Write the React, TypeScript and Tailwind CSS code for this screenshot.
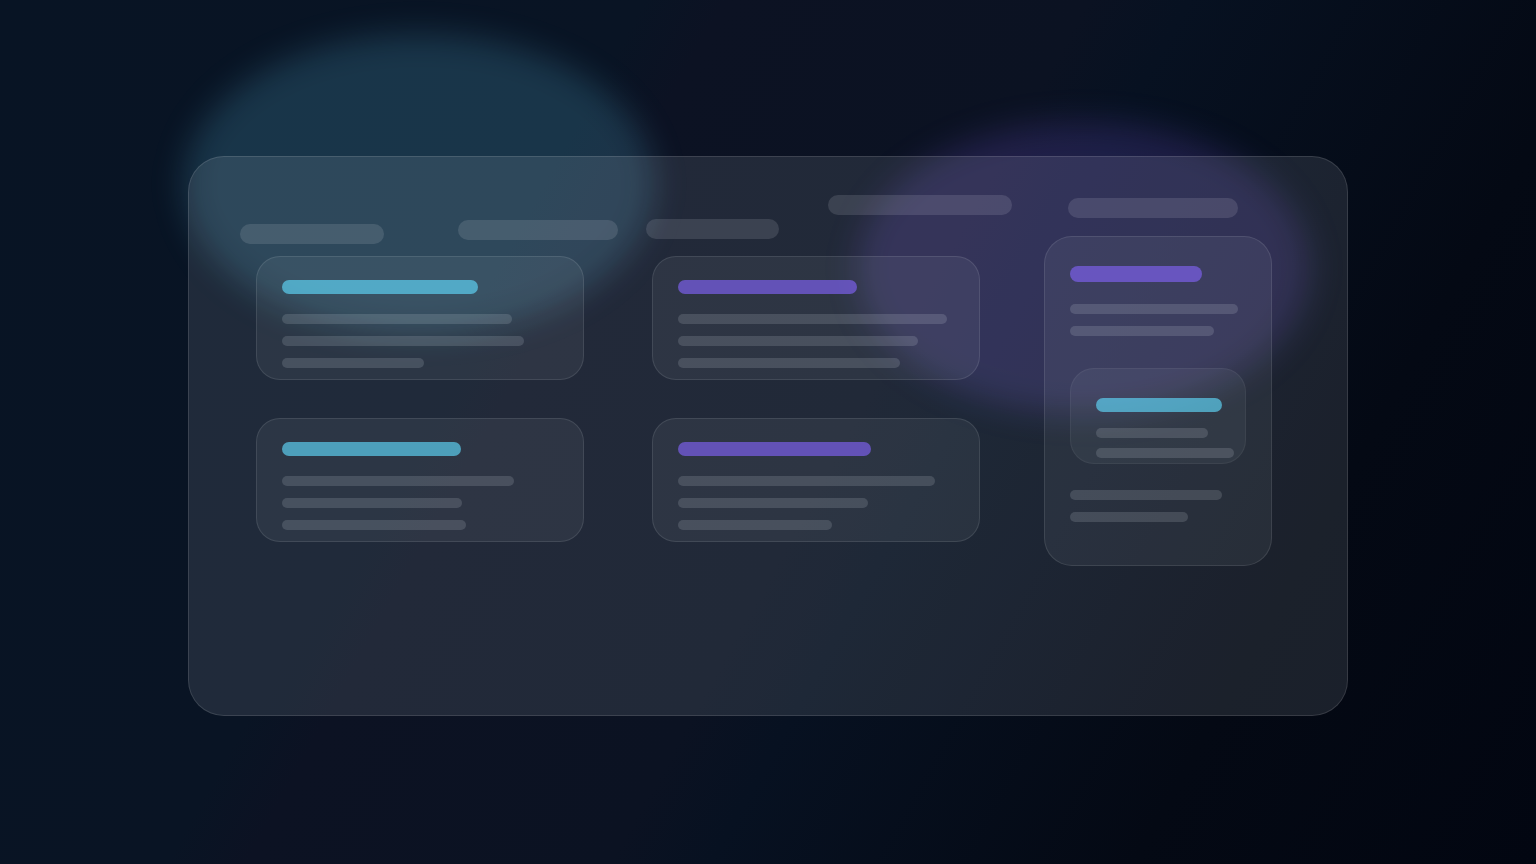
import React from 'react';

interface CardData {
  id: number;
  title: string;
  lines: string[];
}

const TEAL = 'bg-[#5fd8fb]/65';
const VIOLET = 'bg-[#7b5fe8]/70';

const cards: CardData[] = [
  { id: 1, title: `w-[196px] ${TEAL}`, lines: ['w-[230px]', 'w-[242px]', 'w-[142px]'] },
  { id: 2, title: `w-[179px] ${VIOLET}`, lines: ['w-[269px]', 'w-[240px]', 'w-[222px]'] },
  { id: 3, title: `w-[179px] ${TEAL}`, lines: ['w-[232px]', 'w-[180px]', 'w-[184px]'] },
  { id: 4, title: `w-[193px] ${VIOLET}`, lines: ['w-[257px]', 'w-[190px]', 'w-[154px]'] },
];

const Line: React.FC<{ width: string }> = ({ width }) => (
  <div className={`h-2.5 max-w-full rounded-full bg-[#f4f7ff]/14 ${width}`} />
);

const Pill: React.FC<{ className: string }> = ({ className }) => (
  <div className={`h-5 rounded-full bg-[#f4f7ff]/12 ${className}`} />
);

const Card: React.FC<{ card: CardData }> = ({ card }) => (
  <article className="h-[124px] rounded-3xl border border-white/10 bg-[#f4f7ff]/6 px-[25px] pt-[23px]">
    <div className={`h-3.5 rounded-full ${card.title}`} />
    <div className="mt-5 flex flex-col gap-3">
      {card.lines.map((width, i) => (
        <Line key={i} width={width} />
      ))}
    </div>
  </article>
);

const Sidebar: React.FC = () => (
  <aside className="h-[330px] rounded-[28px] border border-white/10 bg-[#f4f7ff]/6 px-[25px] pt-[29px]">
    <div className={`h-4 w-[132px] rounded-full ${VIOLET}`} />
    <div className="mt-[22px] flex flex-col gap-3">
      <Line width="w-[168px]" />
      <Line width="w-[144px]" />
    </div>
    <div className="mt-8 h-24 rounded-3xl border border-white/5 bg-[#f4f7ff]/5 pt-[29px] pl-[25px]">
      <div className={`h-3.5 w-[126px] rounded-full ${TEAL}`} />
      <div className="mt-4 flex flex-col gap-2.5">
        <Line width="w-[112px]" />
        <Line width="w-[138px]" />
      </div>
    </div>
    <div className="mt-[26px] flex flex-col gap-3">
      <Line width="w-[152px]" />
      <Line width="w-[118px]" />
    </div>
  </aside>
);

const App: React.FC = () => {
  return (
    <div className="relative min-h-screen overflow-hidden bg-[linear-gradient(119deg,#081424_0%,#091424_32%,#0c1223_36%,#0b1222_54%,#071121_59%,#040914_80%,#020611_100%)]">
      {/* Glow behind the glass */}
      <div className="absolute top-[34px] left-[184px] h-[300px] w-[470px] rounded-[50%] bg-[#66ccf6]/18 blur-[16px]" />
      <div className="absolute top-[122px] left-[858px] h-[292px] w-[452px] rounded-[50%] bg-[#835cf6]/18 blur-[16px]" />

      <main className="relative px-[188px] pt-[156px] pb-[148px]">
        <section className="flex min-h-[560px] items-start gap-8 rounded-[36px] border border-white/12 bg-[#eafaff]/10 pt-[38px] pr-[75px] pl-[51px]">
          <div className="min-w-0 flex-1">
            <header className="flex h-[61px] items-start">
              <Pill className="mt-[29px] w-36" />
              <Pill className="mt-[25px] ml-[74px] w-40" />
              <Pill className="mt-6 ml-7 w-[133px]" />
              <Pill className="ml-[49px] w-[184px]" />
            </header>
            <div className="mr-8 ml-4 grid grid-cols-2 gap-x-[68px] gap-y-[38px]">
              {cards.map((card) => (
                <Card key={card.id} card={card} />
              ))}
            </div>
          </div>

          <div className="w-[228px] shrink-0 pt-[3px]">
            <Pill className="mb-[18px] ml-6 w-[170px]" />
            <Sidebar />
          </div>
        </section>
      </main>
    </div>
  );
};

export default App;
